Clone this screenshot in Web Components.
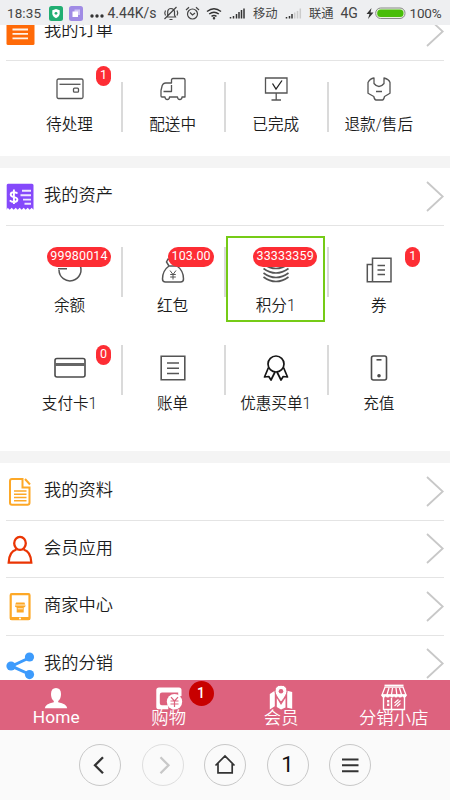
<!DOCTYPE html>
<html lang="zh-CN">
<head>
<meta charset="utf-8">
<title>会员中心</title>
<style>
html,body{margin:0;padding:0}
body{width:450px;height:800px;overflow:hidden;background:#fff;color:#222;font-family:Roboto,"Noto Sans CJK SC",sans-serif}
svg{display:block;overflow:visible}
</style>
</head>
<body>
<phone-screen>
  <status-bar slot="status"></status-bar>
  <list-row label="我的订单">
    <svg width="28" height="28" viewBox="0 0 28 28"><rect x="-.5" y="-1" width="28" height="28" rx="1.5" fill="#ff6a08"/><path d="M6 12.500h15.500M6 16.900h15.500M6 21.300h15.500" transform="translate(-.5 -1)" stroke="#fff3e8" stroke-width="1.800"/></svg>
  </list-row>
  <cell-grid style="--h:95px;--pad:5px;--line:16px">
    <asset-cell label="待处理" badge="1"><svg width="28" height="22" viewBox="0 0 28 22" fill="none" stroke="#555" stroke-width="1.3"><rect x="1" y="1" width="26" height="19.5" rx="1.5"/><path d="M3.5 6.3h21"/><rect x="17.500" y="10.200" width="5" height="4" rx="1"/></svg></asset-cell>
    <asset-cell label="配送中"><svg width="26" height="24" viewBox="0 0 26 24" fill="none" stroke="#555" stroke-width="1.3" stroke-linejoin="round"><path d="M11.500 6V3q0-1.500 1.500-1.500h10.500q1.500 0 1.500 1.500v17h-3q0 2.500-2.200 2.500t-2.300-2.500h-8q0 2.500-2.200 2.500t-2.300-2.500H2q-1 0-1-1v-5.500l1.200-5q1-2.500 3.500-2.500z"/><path d="M11.500 8v6.500h-8"/></svg></asset-cell>
    <asset-cell label="已完成"><svg width="24" height="24" viewBox="0 0 24 24" fill="none" stroke="#555" stroke-width="1.3"><path d="M1.500 1h21.500v15H1.500zM12.200 16v7M7.500 23h9.500"/><path d="M8.500 6.500l3.500 5.500 6-8.500" stroke="#222"/></svg></asset-cell>
    <asset-cell label="退款/售后"><svg width="24" height="24" viewBox="0 0 24 24" fill="none" stroke="#555" stroke-width="1.300" stroke-linejoin="round"><path d="M7 1v5.500q2.300 3 5 3t5-3V1q5 1.200 6 4.500v10.800l-5.500 3.200q-.8 3.500-2 3.500H9q-1.500 0-2.200-3.500L1 16.300V5.500Q3 1.500 7 1z"/><path d="M9 14.500h6" stroke-width="1.500"/></svg></asset-cell>
  </cell-grid>
  <section-gap></section-gap>
  <list-row label="我的资产">
    <svg width="26" height="28" viewBox="0 0 26 28"><path d="M1.500 1.200h23q1.500 0 1.500 1.500v24.500l-1.800-2-2 2-2-2-2 2-2-2-2 2-2-2-2 2-2-2-2 2-2-2-2 2-2-2-1 2V2.700q0-1.500 1.300-1.500z" fill="#8549fb" transform="translate(.5 -.5)"/><path d="M15 7.800h9M13.500 12.300h10.500M16 16.600h8M17.500 20.800h6.500" stroke="#eee5ff" stroke-width="1.900"/><path d="M10.500 10.500Q9.500 9.300 7 9.300q-3.300 0-3.300 2.300 0 2 3.200 2.500 3.500.5 3.500 2.500 0 2.400-3.400 2.400-2.600 0-4.200-1.600M6.900 6.600v14.500" fill="none" stroke="#fff" stroke-width="1.900"/></svg>
  </list-row>
  <cell-grid style="--h:225px;--pad:21px;--line:0px">
    <asset-cell label="余额" badge="99980014"><svg width="26" height="26" viewBox="0 0 26 26" fill="none" stroke="#555" stroke-width="1.500"><path d="M2 13a11 11 0 1 0 3.500-8.200M1 11.800h9"/></svg></asset-cell>
    <asset-cell label="红包" badge="103.00"><svg width="24" height="26" viewBox="0 0 24 26" fill="none" stroke="#555" stroke-width="1.500"><path d="M8 9Q1.500 13.500 1.500 22q0 3 3 3h15q3 0 3-3Q22.500 13.500 16 9zM8 9L5.500 5l1.500-3 4 1 4-1 3 2-2 5"/><path d="M9 13.500l3 4 3-4M12 17.500v5M9.200 17.500h5.600M9.200 20h5.600" stroke-width="1"/></svg></asset-cell>
    <asset-cell label="积分1" badge="33333359"><svg width="26" height="26" viewBox="0 0 26 26" fill="none" stroke="#555" stroke-width="1.700"><path d="M.5 20Q13 29 25.500 20M.5 16Q13 25 25.500 16M.5 11.500Q13 20.500 25.500 11.500M.5 7Q13 16 25.500 7"/></svg></asset-cell>
    <asset-cell label="券" badge="1"><svg width="26" height="26" viewBox="0 0 26 26" fill="none" stroke="#555" stroke-width="1.500"><path d="M6.500 24.800V1.200H25v23.600H1.300V7.500h5"/><path d="M11.500 8.500h7.500M11.500 13h7.500M11.500 17.500h7.500"/></svg></asset-cell>
    <asset-cell label="支付卡1" badge="0"><svg width="32" height="22" viewBox="0 0 32 22" fill="none" stroke="#4b4b4b" stroke-width="1.600"><rect x="1" y="1.500" width="30" height="18.500" rx="2"/><path d="M1 7.500h30" stroke-width="3" stroke="#666"/></svg></asset-cell>
    <asset-cell label="账单"><svg width="26" height="26" viewBox="0 0 26 26" fill="none" stroke="#555" stroke-width="1.600"><path d="M1.200 1.200h23.600v23.600H1.200z"/><path d="M7 8h12M7 13.200h12M7 18.500h12" stroke-width="1.400"/></svg></asset-cell>
    <asset-cell label="优惠买单1"><svg width="26" height="26" viewBox="0 0 26 26" fill="none" stroke="#151515" stroke-width="1.700" stroke-linejoin="round"><circle cx="13" cy="9" r="8"/><path d="M5.500 12.500L1.500 22l4.300-.5 2.200 3.500 4-8M20.500 12.500l4 9.500-4.300-.5-2.200 3.500-4-8"/></svg></asset-cell>
    <asset-cell label="充值"><svg width="18" height="26" viewBox="0 0 18 26" fill="none" stroke="#4b4b4b" stroke-width="1.600"><rect x="1.500" y="1" width="15" height="24" rx="2"/><path d="M6.500 4.800h5"/><circle cx="9" cy="20.800" r="1" fill="#444"/></svg></asset-cell>
    <focus-frame slot="overlay"></focus-frame>
  </cell-grid>
  <section-gap></section-gap>
  <list-row label="我的资料"><svg width="26" height="28" viewBox="0 0 26 28" fill="none" stroke="#fda827" stroke-width="2"><path d="M15.500 1H5q-2 0-2 2v21.800q0 2 2 2h15.500q2 0 2-2V9.500h-7z"/><path d="M18 1l5 5.500" stroke-width="2"/><path d="M7 13h12.500M7 16.200h12.500M7 19.400h12.500M7 22.700h12.500" stroke-width="1.500"/></svg></list-row>
  <list-row label="会员应用"><svg width="26" height="28" viewBox="0 0 26 28" fill="none" stroke="#ea3504" stroke-width="2.300"><ellipse cx="13" cy="7.300" rx="5.800" ry="6.500"/><path d="M9.500 13.500Q2 15.500 1.700 26.700h22.600Q24 15.500 16.500 13.500"/></svg></list-row>
  <list-row label="商家中心"><svg width="26" height="28" viewBox="0 0 26 28"><g transform="translate(-.5 -.5)"><rect x="4.200" y="1.700" width="18.800" height="25" rx="1" fill="none" stroke="#fda827" stroke-width="2.200"/><path d="M3.500 24.500h20v3h-20z" fill="#fda827"/><circle cx="13.500" cy="26" r="1" fill="#fff"/><path d="M9.500 10h8.500l1 3.300q0 1.700-1.800 1.700v5h-7v-5q-1.800 0-1.800-1.700z" fill="#fda827"/><path d="M8.500 12.500h10.500M11.200 16.300h5.200" stroke="#fff" stroke-width=".8"/></g></svg></list-row>
  <list-row label="我的分销"><svg width="28" height="28" viewBox="0 0 28 28"><g transform="translate(0 1)"><path d="M23 5.500L4.500 14.200 23 22.500" fill="none" stroke="#3d9bfc" stroke-width="3"/><g fill="#3d9bfc"><circle cx="22.500" cy="5" r="4.600"/><circle cx="4" cy="14" r="4.600"/><circle cx="22.500" cy="22.600" r="4.600"/></g></g></svg></list-row>
  <tab-bar slot="tabs">
    <tab-item label="Home" latin><svg width="24" height="26" viewBox="0 0 24 26"><path d="M12 4q5 0 5 6 0 5-2.800 7v1.200q8.500 1.500 9 6H.8q.5-4.500 9-6V17Q7 15 7 10q0-6 5-6z" fill="#fff"/></svg></tab-item>
    <tab-item label="购物" badge="1"><svg width="26" height="26" viewBox="0 0 26 26"><path d="M3 3.500h20q2.500 0 2.500 2.500v6h-3.300V8.500H6q-2.200 0-2.200 2.200v8.600q0 2 2 2h6.500v4H3Q.3 25.300.3 23V6Q.3 3.500 3 3.500z" fill="#fff"/><circle cx="18.500" cy="17.800" r="7.700" fill="#fff"/><path d="M15 13.200l3.500 3.800 3.500-3.800M18.500 17v6M14.500 17h8M14.500 20h8" fill="none" stroke="#dd627e" stroke-width="1.200"/></svg></tab-item>
    <tab-item label="会员"><svg width="26" height="26" viewBox="0 0 26 26"><path d="M1.800 10l5-3.200v15.500l-5 3.200zM24.200 8l-5-1.200v17l5 1zM8.800 14l4.200 7 4.500-7v9.500l-4.500 2-4.200-2.500z" fill="#fff"/><path d="M13 1.200q6 0 6 6 0 3.600-6 11-6-7.400-6-11 0-6 6-6z" fill="#fff" stroke="#dd627e" stroke-width="1"/><circle cx="13" cy="7.200" r="2.300" fill="#dd627e"/></svg></tab-item>
    <tab-item label="分销小店"><svg width="26" height="26" viewBox="0 0 26 26" fill="none" stroke="#fff"><path d="M3.500 1.500h19" stroke-width="1.800"/><path d="M4 3.200L1 11h24L22 3.200zM8 4l-2 6.500M11.500 4l-1 6.500M15 4l.8 6.500M18.500 4l2 6.500" stroke-width="1.300"/><path d="M.5 10.500h25v1q0 2-2 2t-2.200-1.200q-.5 1.200-2.200 1.200t-2.100-1.200q-.5 1.200-2 1.200t-2-1.200q-.5 1.200-2 1.200t-2-1.200q-.5 1.200-2.200 1.200t-2-1.200q-.5 1.200-2 1.200-2.300 0-2.300-2z" fill="#fff" stroke="none"/><path d="M2.500 13v12.500h21V13M10.500 14v11" stroke-width="1.400"/><path d="M7.200 16v6" stroke-width="2.200" stroke-dasharray="2.500 1"/><path d="M13.500 19l4-3.500M13.500 22l6-5.500M16 22.500l3.500-3" stroke-width="1.200"/></svg></tab-item>
  </tab-bar>
  <nav-bar slot="nav">
    <round-button><svg width="42" height="42" viewBox="0 0 42 42" fill="none" stroke="#333" stroke-width="2.300"><path d="M24 13.300l-8 8 8 8"/></svg></round-button>
    <round-button style="--ring:#dedede"><svg width="42" height="42" viewBox="0 0 42 42" fill="none" stroke="#c8c8c8" stroke-width="2.300"><path d="M18.500 13.300l8 8-8 8"/></svg></round-button>
    <round-button><svg width="42" height="42" viewBox="0 0 42 42" fill="none" stroke="#333" stroke-width="1.700"><path d="M11.500 21.500L21 12l9.500 9.500M14 19.500v9.300h14.200v-9.300"/></svg></round-button>
    <round-button>1</round-button>
    <round-button><svg width="42" height="42" viewBox="0 0 42 42" fill="none" stroke="#333" stroke-width="2"><path d="M13 15.500h16.500M13 21.300h16.500M13 27.200h16.500"/></svg></round-button>
  </nav-bar>
</phone-screen>
<script>
function define(name, html) {
  customElements.define(name, class extends HTMLElement {
    constructor() {
      super();
      const template = document.createElement('template');
      template.innerHTML = html;
      const root = this.attachShadow({ mode: 'open' });
      root.appendChild(template.content.cloneNode(true));
      const label = root.querySelector('.label');
      if (label) label.textContent = this.getAttribute('label') || '';
      const badge = root.querySelector('.badge');
      if (badge) {
        if (this.hasAttribute('badge')) badge.textContent = this.getAttribute('badge');
        else badge.remove();
      }
    }
  });
}

define('phone-screen', `<style>
:host{display:flex;flex-direction:column;width:450px;height:800px}
main{flex:1;overflow:hidden;min-height:0}
.scroll{margin-top:-22px}
</style><slot name="status"></slot><main><div class="scroll"><slot></slot></div></main><slot name="tabs"></slot><slot name="nav"></slot>`);

define('status-bar', `<style>
:host{display:flex;align-items:center;height:25px;box-sizing:border-box;background:#eeeff1;color:#444;font-size:13.5px;padding:1px 0 0 7px;white-space:nowrap}
span,svg{flex:none}
svg{display:block;overflow:visible}
.cn{font-size:12.3px}
</style>
<span style="width:42px;letter-spacing:.1px">18:35</span>
<svg width="14" height="15" viewBox="0 0 14 15"><rect width="14" height="15" rx="2.500" fill="#21ae72"/><path d="M7 3l3.700 1.300v3.500Q10.500 10.500 7 12.300 3.500 10.500 3.300 7.800V4.300z" fill="#fff"/><circle cx="7" cy="7.300" r="1.400" fill="#21ae72"/></svg>
<svg width="14" height="15" viewBox="0 0 14 15" style="margin-left:6px"><rect width="14" height="15" rx="2.500" fill="#a08be5"/><path d="M5.500 3.500H11V9H5.500z" fill="#cfc4f5"/><path d="M3.500 5.500H9V11H3.500z" fill="#fff"/></svg>
<svg width="14" height="15" viewBox="0 0 14 15" style="margin-left:6.500px" fill="#333"><circle cx="2" cy="10" r="1.700"/><circle cx="7" cy="10" r="1.700"/><circle cx="12" cy="10" r="1.700"/></svg>
<span style="margin-left:4px;width:56px;font-size:14px">4.44K/s</span>
<svg width="16" height="15" viewBox="0 0 16 15" style="margin-left:-.5px" fill="none" stroke="#444" stroke-width="1.200"><path d="M4 11h8.500l-1-2V5.500Q11 2.500 8 2.500T4.700 5.500V9zM6.500 13.500h3M1.500 13L13.500 1M2.500 4.500q-1.500 2.500 0 5M14 4.500q1.500 2.500 0 5"/></svg>
<svg width="15" height="15" viewBox="0 0 15 15" style="margin-left:5.500px" fill="none" stroke="#444" stroke-width="1.200"><circle cx="7.500" cy="8" r="5"/><path d="M5 6.500L7.500 9l2.500-2M1 4l3-2.700M14 4l-3-2.700"/></svg>
<svg width="16" height="15" viewBox="0 0 16 15" style="margin-left:6px" fill="none" stroke="#333" stroke-width="1.500"><path d="M1 5.500q7-5.500 14 0M3.200 8q4.800-3.700 9.600 0M5.500 10.300q2.500-1.800 5 0"/><circle cx="8" cy="12.200" r=".5" fill="#333"/></svg>
<svg width="17" height="15" viewBox="0 0 17 15" style="margin-left:7.500px" stroke="#333" stroke-width="1.500"><path d="M1.500 12.500v-1.500M4.500 12.500V10M7.500 12.500V8M10 12.500V6M12.500 12.500V4M15 12.500V2.500"/></svg>
<span class="cn" style="margin-left:7px;width:25px">移动</span>
<svg width="17" height="15" viewBox="0 0 17 15" style="margin-left:7px" stroke="#333" stroke-width="1.500"><path d="M1.500 12.500v-1.500M4.500 12.500V10M7 12.500V8"/><path d="M9.700 12.500V6.500M12.500 12.500V5M15.300 12.500V2.500" stroke="#ccc"/></svg>
<span class="cn" style="margin-left:7px;width:25px">联通</span>
<span style="margin-left:6.500px;width:20px;font-size:14px">4G</span>
<svg width="8" height="13" viewBox="0 0 8 13" style="margin-left:5px"><path d="M5.500 1L.5 7h3L2 12l5.500-6.500h-3z" fill="#333"/></svg>
<svg width="31" height="13" viewBox="0 0 31 13" style="margin-left:1.500px"><rect x=".7" y="1" width="29.300" height="10.500" rx="5" fill="#e8f4dd" stroke="#888" stroke-width="1"/><rect x="2.200" y="2.500" width="26.300" height="7.500" rx="3.500" fill="#48bd08"/></svg>
<span style="margin-left:3.500px;font-size:13.500px;letter-spacing:-.2px">100%</span>`);

define('list-row', `<style>
:host{display:flex;align-items:flex-start;height:57.500px;box-sizing:border-box;margin:0 6px;border-bottom:1px solid #e4e4e4}
.icon{width:38px;flex:none;padding:15px 0 0 1px;box-sizing:border-box}
.label{flex:1;font-size:17.250px;font-weight:350;line-height:27px;padding-top:14px;color:#1c1c1c}
.arrow{width:18px;flex:none;padding-top:12.500px}
svg{display:block;overflow:visible}
</style><div class="icon"><slot></slot></div><div class="label"></div><div class="arrow"><svg width="18" height="31" viewBox="0 0 18 31" fill="none" stroke="#c8c8c8" stroke-width="1.800"><path d="M1 1l15.700 14.500L1 30"/></svg></div>`);

define('section-gap', `<style>:host{display:block;height:12.500px;background:#f4f4f4}</style>`);

define('cell-grid', `<style>
:host{display:grid;position:relative;box-sizing:border-box;height:var(--h);padding:var(--pad) 19px 0 18.500px;grid-template-columns:repeat(4,103.100px);grid-auto-rows:98px}
</style><slot></slot><slot name="overlay"></slot>`);

define('asset-cell', `<style>
:host{display:flex;flex-direction:column;align-items:center;position:relative;width:102px;height:75px}
.icon{height:46px;display:flex;align-items:center;justify-content:center}
.label{font-size:15.600px;font-weight:350;line-height:24px;padding-top:1.500px;color:#1c1c1c;white-space:nowrap}
.rule{position:absolute;right:-2px;top:var(--line);width:1.500px;height:50px;background:#dadada}
:host(:nth-of-type(4n)) .rule{display:none}
.badge{position:absolute;right:9.500px;top:0;min-width:15px;height:20px;box-sizing:border-box;padding:0 3.300px;border-radius:10px;background:#fd2d34;color:#fff;font-size:12.500px;line-height:18px;letter-spacing:.15px;text-align:center}
</style><div class="icon"><slot></slot></div><div class="label"></div><i class="rule"></i><span class="badge"></span>`);

define('focus-frame', `<style>:host{position:absolute;left:226px;top:10px;width:99px;height:86px;box-sizing:border-box;border:2px solid #75cb16}</style>`);

define('tab-bar', `<style>:host{display:grid;grid-template-columns:repeat(4,1fr);height:50px;background:#dd627e;color:#fff;flex:none}</style><slot></slot>`);

define('tab-item', `<style>
:host{display:flex;flex-direction:column;align-items:center;position:relative;padding-top:4px}
.label{font-size:17.300px;font-weight:350;line-height:24px;margin-top:-4px;white-space:nowrap;letter-spacing:.1px}
:host([latin]) .label{font-weight:400;margin-top:-5px}
.badge{position:absolute;left:76px;top:1px;width:25px;height:25px;border-radius:50%;background:#c80000;font-size:14px;font-weight:500;line-height:24px;text-align:center}
</style><slot></slot><div class="label"></div><span class="badge"></span>`);

define('nav-bar', `<style>:host{display:flex;gap:20.500px;height:70px;box-sizing:border-box;padding:14px 0 0 79px;background:#fafafa;flex:none}</style><slot></slot>`);

define('round-button', `<style>
:host{display:flex;align-items:center;justify-content:center;width:42px;height:42px;box-sizing:border-box;border:1px solid var(--ring,#c8c8c8);border-radius:50%;font-size:22px;line-height:40px;color:#111}
</style><slot></slot>`);
</script>
</body>
</html>
